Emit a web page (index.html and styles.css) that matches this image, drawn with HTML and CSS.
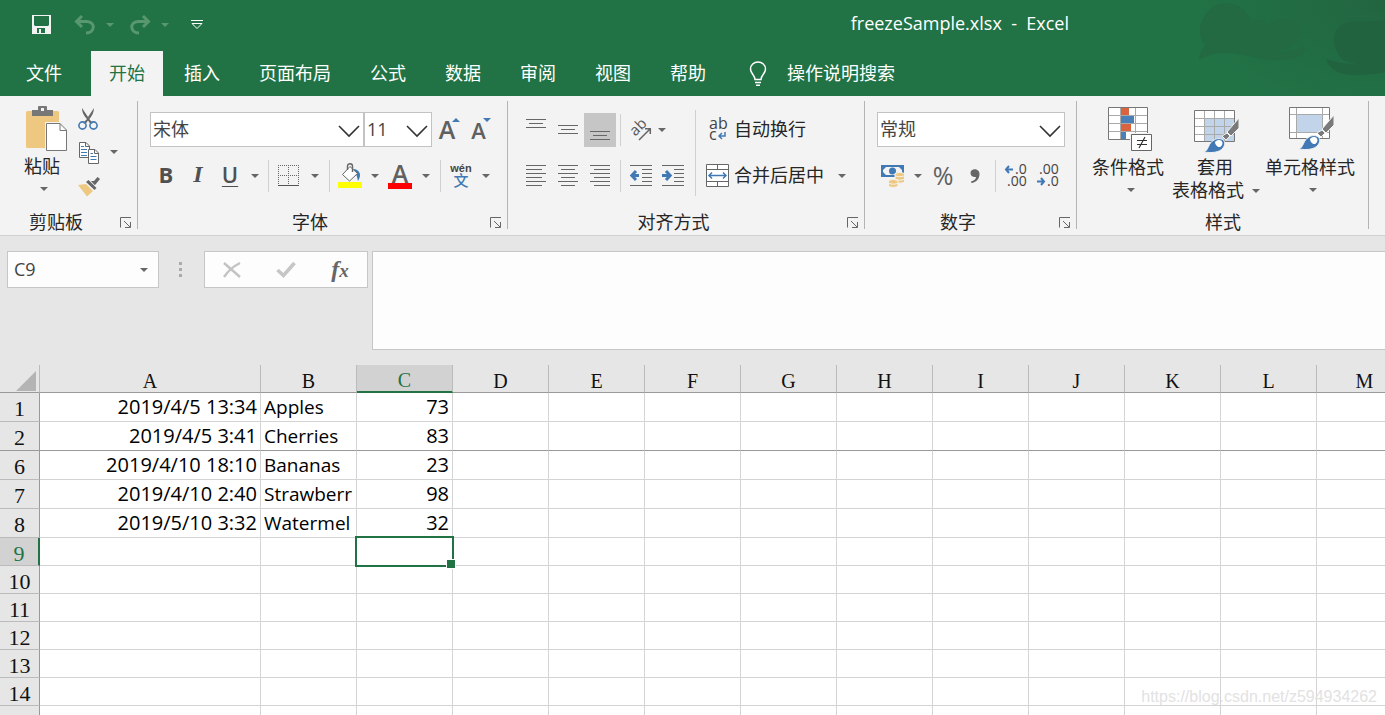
FILE: index.html
```html
<!DOCTYPE html>
<html lang="zh-CN">
<head>
<meta charset="utf-8">
<title>freezeSample.xlsx - Excel</title>
<link rel="stylesheet" href="styles.css">
</head>
<body>
<header class="top">
  <svg class="decor" width="240" height="96" viewBox="0 0 240 96" aria-hidden="true">
    <defs><radialGradient id="fade" gradientUnits="userSpaceOnUse" cx="240" cy="0" r="200" gradientTransform="translate(0 0) scale(1 .6)"><stop offset="0" stop-color="#226540"/><stop offset="1" stop-color="#217346"/></radialGradient></defs>
    <path fill="url(#fade)" d="M0 0H240V96H0z"/>
    <path fill="#236a42" d="M61 45C50 38 53 12 74 4C92 0 102 10 106 22C112 18 120 20 124 25C134 15 154 19 155 31C156 42 150 48 128 52C142 52 151 49 161 47C158 60 138 63 112 58C90 53 74 49 54 60C55 52 57 48 61 45z"/>
    <path fill="#22633f" d="M240 20C226 23 208 19 198 24C186 30 186 48 198 60C206 64 214 64 220 65C206 64 192 63 181 59C184 70 196 75 208 75C224 75 234 74 240 72z"/>
  </svg>
  <div class="titlebar">
    <div class="qat">
      <button class="q" aria-label="保存"><svg width="20" height="20" viewBox="0 0 20 20"><path fill="#f3f3f3" fill-rule="evenodd" d="M0 0H19V19H0zM2 1V10L3 11H16L17 10V1zM5 13V18H7V14H9V18H13V13z"/></svg></button>
      <button class="q dim undo" aria-label="撤消"><svg width="22" height="20" viewBox="0 0 22 20"><path fill="none" stroke="#59976f" stroke-width="3" d="M8 1L2.500 6.500L8 12M2.500 6.500H13C22 7 21 18 12 18"/></svg></button>
      <button class="c qc" aria-label="撤消选项"><i class="caret"></i></button>
      <button class="q dim redo" aria-label="恢复"><svg width="22" height="20" viewBox="0 0 22 20"><path fill="none" stroke="#59976f" stroke-width="3" d="M14 1L19.500 6.500L14 12M19.500 6.500H9C0 7 1 18 10 18"/></svg></button>
      <button class="c qc" aria-label="恢复选项"><i class="caret"></i></button>
      <button class="q more" aria-label="自定义快速访问工具栏"><svg width="12" height="10" viewBox="0 0 12 10"><path fill="none" stroke="#fff" d="M0 .5H12M1 3.500L6 8.500L11 3.500z"/></svg></button>
    </div>
    <div class="title">freezeSample.xlsx &nbsp;-&nbsp; Excel</div>
  </div>
  <nav class="tabs">
    <button class="tab file">文件</button><button class="tab active">开始</button><button class="tab">插入</button><button class="tab">页面布局</button><button class="tab">公式</button><button class="tab">数据</button><button class="tab">审阅</button><button class="tab">视图</button><button class="tab">帮助</button>
    <button class="tell"><svg width="18" height="26" viewBox="0 0 18 26"><path fill="none" stroke="#fff" stroke-width="1.500" d="M6 18.500C6 14 1.500 13 1.500 8A7.500 7 0 0 1 16.500 8C16.500 13 12 14 12 18.500zM6 21.500H12M7 24.200H11"/></svg><span>操作说明搜索</span></button>
  </nav>
</header>

<section class="ribbon">
  <div class="group">
    <div class="clip">
      <button class="big paste"><svg width="42" height="46" viewBox="0 0 42 46"><rect y="5" width="33" height="37" rx="1.500" fill="#eec881"/><path fill="#777" d="M6 4H12V1Q12 0 13 0H20Q21 0 21 1V4H27V10H6z"/><rect x="15" y="2" width="3" height="3" fill="#f3f3f3"/><path fill="#fff" stroke="#f3f3f3" stroke-width="3" d="M20.500 17.500H34L40.500 24V44.500H20.500z"/><path fill="#fff" stroke="#777" d="M20.500 17.500H34L40.500 24V44.500H20.500zM34 17.500V24.500H40.500"/></svg><span>粘贴</span><i class="caret"></i></button>
      <div class="small">
        <button class="ic" aria-label="剪切"><svg width="22" height="24" viewBox="0 0 22 24"><path fill="#666" d="M4 1L12 13L15 16L12.500 17L10 13.500L7.500 17L5 16L9 12C5 8 4 4 4 1zM16 1C16 5 14 9 11.500 12L10 10z"/><g fill="none" stroke="#4179b4" stroke-width="1.600"><circle cx="4.500" cy="18.500" r="3.600"/><circle cx="15.500" cy="18.500" r="3.600"/></g></svg></button>
        <button class="ic" aria-label="复制"><svg width="22" height="24" viewBox="0 0 22 24"><g fill="#fff" stroke="#666"><path d="M1.500 1.500H8L11.500 5V16.500H1.500zM7.500 1.500V5.500H11.500"/><path d="M10.500 8.500H17L20.500 12V22.500H10.500zM16.500 8.500V12.500H20.500"/></g><path stroke="#4179b4" d="M3 5.500H6M3 8.500H9M3 11.500H9M3 14.500H9M12.500 12.500H15M12.500 15.500H18.500M12.500 18.500H18.500"/></svg></button>
        <button class="ic" aria-label="格式刷"><svg width="24" height="22" viewBox="0 0 24 22"><path fill="#eec881" d="M1 9L9 8L16 15L10 20.500z"/><path fill="#666" d="M9 6L11.500 4L19.500 12L17.500 14zM14 5L17 5L20.500 1L23 3L18.500 8.500L17.500 9z"/></svg></button>
      </div>
      <button class="c" aria-label="复制选项"><i class="caret"></i></button>
    </div>
    <footer><span>剪贴板</span><button class="launch" aria-label="剪贴板设置"><svg width="12" height="12" viewBox="0 0 12 12"><path fill="none" stroke="#666" d="M.5 10.500V.5H11M4 4L10 10M10.500 5V10.500H5"/></svg></button></footer>
  </div>

  <div class="group pad">
    <div class="rows">
      <div class="row">
        <label class="sel fontname"><select aria-label="字体"><option>宋体</option></select><svg width="22" height="12" viewBox="0 0 22 12"><path d="M1 1L11 11L21 1"/></svg></label>
        <label class="sel fontsize"><select aria-label="字号"><option>11</option></select><svg width="22" height="12" viewBox="0 0 22 12"><path d="M1 1L11 11L21 1"/></svg></label>
        <button class="ic b32 grow" aria-label="增大字号"><b>A</b><i class="up"></i></button>
        <button class="ic b32 shrink" aria-label="减小字号"><b>A</b><i class="down"></i></button>
      </div>
      <div class="row">
        <button class="ic b32 glyph bold">B</button><button class="ic b32 glyph ital">I</button><button class="ic b32 glyph under">U</button>
        <button class="c c18" aria-label="下划线选项"><i class="caret"></i></button><i class="sep"></i>
        <button class="ic b32" aria-label="边框"><svg width="22" height="22" viewBox="0 0 22 22"><path fill="none" stroke="#666" stroke-dasharray="1 1" d="M.5 0V20M10.500 0V20M20.500 0V20M0 .5H21M0 10.500H21"/><path stroke="#555" d="M0 20.500H21"/></svg></button>
        <button class="c c20" aria-label="边框选项"><i class="caret"></i></button><i class="sep"></i>
        <button class="ic b32" aria-label="填充颜色"><svg width="24" height="26" viewBox="0 0 24 26"><path fill="#4179b4" d="M16 6C22 7 24 12 20 18C19 14 19 11 15 8z"/><path fill="#fff" stroke="#666" d="M12 3.500L19.500 10.500L11.500 18L4.500 11.500z"/><path fill="none" stroke="#666" stroke-width="1.400" d="M9.500 7V3C9.500 0 14.500 0 14.500 3V9"/><path fill="#ff0" d="M0 19H24V25H0z"/></svg></button>
        <button class="c c18" aria-label="填充选项"><i class="caret"></i></button>
        <button class="ic b32 fcolor" aria-label="字体颜色"><b>A</b></button>
        <button class="c c20" aria-label="字体颜色选项"><i class="caret"></i></button><i class="sep"></i>
        <button class="ic b32 wen" aria-label="拼音"><span>wén</span><em>文</em></button>
        <button class="c c18" aria-label="拼音选项"><i class="caret"></i></button>
      </div>
    </div>
    <footer><span>字体</span><button class="launch" aria-label="字体设置"><svg width="12" height="12" viewBox="0 0 12 12"><path fill="none" stroke="#666" d="M.5 10.500V.5H11M4 4L10 10M10.500 5V10.500H5"/></svg></button></footer>
  </div>

  <div class="group pad align">
    <div class="cols">
      <div class="rows">
        <div class="row">
          <button class="ic b32" aria-label="顶端对齐"><svg width="20" height="22" viewBox="0 0 20 22"><path stroke="#666" d="M0 .5H20M3 4.500H17M0 8.500H20"/></svg></button>
          <button class="ic b32" aria-label="垂直居中"><svg width="20" height="22" viewBox="0 0 20 22"><path stroke="#666" d="M0 6.500H20M3 10.500H17M0 14.500H20"/></svg></button>
          <button class="ic b32 on" aria-label="底端对齐"><svg width="20" height="22" viewBox="0 0 20 22"><path stroke="#666" d="M0 12.500H20M3 16.500H17M0 20.500H20"/></svg></button><i class="sep"></i>
          <button class="ic b32" aria-label="方向"><svg width="22" height="22" viewBox="0 0 22 22"><text x="8" y="13" text-anchor="middle" transform="rotate(-45 8 8)" font-size="15" fill="#555">ab</text><path fill="none" stroke="#666" stroke-width="1.500" d="M9 21L20 10M15 9.700H20.300V15"/></svg></button>
          <button class="c c10" aria-label="方向选项"><i class="caret"></i></button>
        </div>
        <div class="row">
          <button class="ic b32" aria-label="左对齐"><svg width="20" height="22" viewBox="0 0 20 22"><path stroke="#666" d="M0 .5H20M0 4.500H16M0 8.500H20M0 12.500H16M0 16.500H20M0 20.500H16"/></svg></button>
          <button class="ic b32" aria-label="居中"><svg width="20" height="22" viewBox="0 0 20 22"><path stroke="#666" d="M0 .5H20M3 4.500H17M0 8.500H20M3 12.500H17M0 16.500H20M3 20.500H17"/></svg></button>
          <button class="ic b32" aria-label="右对齐"><svg width="20" height="22" viewBox="0 0 20 22"><path stroke="#666" d="M0 .5H20M4 4.500H20M0 8.500H20M4 12.500H20M0 16.500H20M4 20.500H20"/></svg></button><i class="sep"></i>
          <button class="ic b32" aria-label="减少缩进量"><svg width="22" height="22" viewBox="0 0 22 22"><path stroke="#666" d="M0 .5H22M12 4.500H22M12 8.500H22M12 12.500H22M12 16.500H22M0 20.500H22"/><path fill="none" stroke="#4179b4" stroke-width="3" d="M6 6L1.800 10.500L6 15M2 10.500H9"/></svg></button>
          <button class="ic b32" aria-label="增加缩进量"><svg width="22" height="22" viewBox="0 0 22 22"><path stroke="#666" d="M0 .5H22M12 4.500H22M12 8.500H22M12 12.500H22M12 16.500H22M0 20.500H22"/><path fill="none" stroke="#4179b4" stroke-width="3" d="M4 6L8.200 10.500L4 15M8 10.500H0"/></svg></button>
        </div>
      </div>
      <i class="tall"></i>
      <div class="rows">
        <div class="row"><button class="txt"><svg width="24" height="24" viewBox="0 0 24 24"><text x="3" y="11" font-size="16" fill="#444">ab</text><text x="3" y="22" font-size="16" fill="#444">c</text><path fill="none" stroke="#4179b4" stroke-width="1.500" d="M19 14V18H13M16 15L13 18L16 21"/></svg><span>自动换行</span></button></div>
        <div class="row"><button class="txt"><svg width="24" height="24" viewBox="0 0 24 24"><path fill="#fff" stroke="#666" d="M.5 .5H22.500V22.500H.5zM.5 5.500H22.500M.5 17.500H22.500M11.500 .5V5.500M11.500 17.500V22.500"/><path fill="none" stroke="#4179b4" stroke-width="1.500" d="M3 11.500H20M6 8.500L3 11.500L6 14.500M17 8.500L20 11.500L17 14.500"/></svg><span>合并后居中</span></button><button class="c c36" aria-label="合并选项"><i class="caret"></i></button></div>
      </div>
    </div>
    <footer><span>对齐方式</span><button class="launch" aria-label="对齐设置"><svg width="12" height="12" viewBox="0 0 12 12"><path fill="none" stroke="#666" d="M.5 10.500V.5H11M4 4L10 10M10.500 5V10.500H5"/></svg></button></footer>
  </div>

  <div class="group pad">
    <div class="rows">
      <div class="row"><label class="sel numfmt"><select aria-label="数字格式"><option>常规</option></select><svg width="22" height="12" viewBox="0 0 22 12"><path d="M1 1L11 11L21 1"/></svg></label></div>
      <div class="row">
        <button class="ic b32" aria-label="会计数字格式"><svg width="24" height="24" viewBox="0 0 24 24"><path fill="#4179b4" fill-rule="evenodd" d="M0 1H23V13H0zM2 3V11H21V3z"/><path fill="#4179b4" d="M2 3H5L2 6zM21 3H18L21 6zM2 11V8L5 11z"/><circle cx="11.500" cy="7" r="3.500" fill="#4179b4"/><g fill="#eec881" stroke="#f3f3f3"><path d="M14 9.500Q19 7 23.500 9.500V18.500Q19 20 14 18.500z"/><path d="M7.500 16.500Q12 14 17 16.500V22.500Q12 24.500 7.500 22.500z"/><path fill="none" d="M14 12Q19 13.500 23 12M14 15.500Q19 17 23 15.500M8 19.500Q12 21 17 19.500"/></g></svg></button>
        <button class="c c18" aria-label="货币选项"><i class="caret"></i></button>
        <button class="ic b32 pct">%</button>
        <button class="ic b32" aria-label="千位分隔样式"><svg width="10" height="16" viewBox="0 0 10 16"><path fill="#666" d="M1 13.500C4 12.500 6 11 6 9C3 9.500 .5 8 .5 5C.5 0 9.500 0 9.500 6C9.500 11 6 14.500 1.500 15z"/></svg></button><i class="sep"></i>
        <button class="ic b32" aria-label="增加小数位数"><svg width="24" height="24" viewBox="0 0 24 24"><text x="11" y="10" font-size="14" fill="#444">.0</text><text x="3" y="22" font-size="14" fill="#444">.00</text><path fill="none" stroke="#4179b4" stroke-width="2" d="M5 2L2 5.500L5 9M2 5.500H9"/></svg></button>
        <button class="ic b32" aria-label="减少小数位数"><svg width="24" height="24" viewBox="0 0 24 24"><text x="3" y="10" font-size="14" fill="#444">.00</text><text x="11" y="22" font-size="14" fill="#444">.0</text><path fill="none" stroke="#4179b4" stroke-width="2" d="M5 14L8 17.500L5 21M8 17.500H1"/></svg></button>
      </div>
    </div>
    <footer><span>数字</span><button class="launch" aria-label="数字设置"><svg width="12" height="12" viewBox="0 0 12 12"><path fill="none" stroke="#666" d="M.5 10.500V.5H11M4 4L10 10M10.500 5V10.500H5"/></svg></button></footer>
  </div>

  <div class="group styles">
    <div class="bigs">
      <button class="big"><svg width="44" height="46" viewBox="0 0 44 46"><rect x=".5" y=".5" width="39" height="32" fill="#fff"/><path stroke="#aaa" d="M12.500 1V32M27.500 1V32M1 8.500H39M1 16.500H39M1 24.500H39"/><path fill="none" stroke="#777" d="M.5 .5H39.500V32.500H.5z"/><path fill="#d9623f" d="M13 1H21V8H13zM13 17H23V24H13z"/><path fill="#4a7fb8" d="M13 9H26V16H13zM13 25H18V32H13z"/><path fill="#fff" stroke="#f3f3f3" stroke-width="3" d="M23.500 27.500H43.500V43.500H23.500z"/><path fill="#fff" stroke="#666" d="M23.500 27.500H43.500V43.500H23.500z"/><path stroke="#333" stroke-width="1.200" d="M29 33.500H39M29 37.500H39M37 30L31 41"/></svg><span>条件格式</span><i class="caret"></i></button>
      <button class="big"><svg width="46" height="46" viewBox="0 0 46 46"><rect x=".5" y="3.500" width="40" height="31" fill="#fff"/><path fill="#c2d4ea" d="M11 12H40V34H11z"/><path stroke="#aaa" d="M10.500 4V34M20.500 4V34M30.500 4V34M1 11.500H40M1 19.500H40M1 27.500H40"/><path fill="none" stroke="#777" d="M.5 3.500H40.500V34.500H.5z"/><g stroke="#f3f3f3"><path fill="#7a7a7a" d="M45 11V21L37 29L33 25zM33 26L36 29L32 33L28 29z"/><path fill="#4179b4" d="M10 45C15 43 14 36 20 33C27 29 34 34 29 41C25 46 17 46 10 45z"/></g><path fill="#fff" d="M21 35C25 31 30 34 28 38C25 43 21 38 21 35z"/></svg><span>套用</span><span class="second">表格格式<i class="caret"></i></span></button>
      <button class="big"><svg width="46" height="46" viewBox="0 0 46 46"><rect x=".5" y=".5" width="40" height="31" fill="#fff"/><path fill="#c2d4ea" d="M8 8H33V25H8z"/><path stroke="#aaa" d="M7.500 1V31M33.500 1V31M1 7.500H40M1 25.500H40"/><path fill="none" stroke="#777" d="M.5 .5H40.500V31.500H.5z"/><g stroke="#f3f3f3"><path fill="#7a7a7a" d="M45 8V18L37 26L33 22zM33 23L36 26L32 30L28 26z"/><path fill="#4179b4" d="M10 42C15 40 14 33 20 30C27 26 34 31 29 38C25 43 17 43 10 42z"/></g><path fill="#fff" d="M21 32C25 28 30 31 28 35C25 40 21 35 21 32z"/></svg><span>单元格样式</span><i class="caret"></i></button>
    </div>
    <footer><span>样式</span></footer>
  </div>
</section>

<section class="formula">
  <label class="name"><input value="C9" aria-label="名称框"><i class="caret"></i></label>
  <svg class="dots" width="3" height="15" viewBox="0 0 3 15"><path fill="#aaa" d="M0 0H3V3H0zM0 6H3V9H0zM0 12H3V15H0z"/></svg>
  <div class="fx">
    <button aria-label="取消"><svg width="18" height="16" viewBox="0 0 18 16"><path fill="none" stroke="#c3c3c3" stroke-width="2.400" d="M1 1L17 15M17 1C11 4 5 9 1 15"/></svg></button>
    <button aria-label="输入"><svg width="20" height="16" viewBox="0 0 20 16"><path fill="none" stroke="#c6c6c6" stroke-width="3.600" d="M1.500 8L7.500 13.500L18.500 1"/></svg></button>
    <button class="f" aria-label="插入函数"><span>f<small>x</small></span></button>
  </div>
  <textarea aria-label="编辑栏"></textarea>
</section>

<main class="sheet">
  <table>
    <thead><tr id="letters"></tr></thead>
    <tbody id="cells"></tbody>
  </table>
  <div class="mark">https://blog.csdn.net/z594934262</div>
</main>
<script src="sheet.js"></script>
</body>
</html>
```
FILE: sheet.js
```js
const columns = "ABCDEFGHIJKLM".split("");
const data = {
  1: ["2019/4/5 13:34", "Apples", "73"],
  2: ["2019/4/5 3:41", "Cherries", "83"],
  6: ["2019/4/10 18:10", "Bananas", "23"],
  7: ["2019/4/10 2:40", "Strawberr", "98"],
  8: ["2019/5/10 3:32", "Watermel", "32"]
};
const rows = [1, 2, 6, 7, 8, 9, 10, 11, 12, 13, 14, 15];
document.getElementById("letters").innerHTML =
  '<th class="corner"><i></i></th>' +
  columns.map(c => `<th class="col${c === "A" ? " wide" : ""}${c === "C" ? " cur" : ""}">${c}</th>`).join("");
document.getElementById("cells").innerHTML = rows.map(r => {
  const values = data[r] || [];
  const kind = (values.length ? "filled" : "") + (r === 2 ? " frozen" : "") + (r === 9 ? " cur" : "");
  const cells = columns.map((c, i) =>
    `<td class="${c === "B" ? "" : "num"}${r === 9 && c === "C" ? " picked" : ""}">${values[i] || ""}</td>`).join("");
  return `<tr class="${kind}"><th>${r}</th>${cells}</tr>`;
}).join("");
```
FILE: styles.css
```css
* { box-sizing: border-box; }
body {
  margin: 0;
  height: 100vh;
  display: flex;
  flex-direction: column;
  overflow: hidden;
  background: #e6e6e6;
  color: #262626;
  font: 18px/23px "Open Sans", "Noto Sans CJK SC", sans-serif;
}
button, select, input, textarea { font: inherit; color: inherit; border: 0; background: none; padding: 0; margin: 0; border-radius: 0; }
svg { display: block; flex: none; overflow: visible; }
button { display: flex; align-items: center; justify-content: center; flex: none; }
.caret { width: 0; height: 0; border: 4px solid transparent; border-top-color: #666; border-bottom: 0; flex: none; }

.top { position: relative; background: #217346; color: #fff; flex: none; }
.decor { position: absolute; right: 0; top: 0; }
.titlebar { position: relative; display: flex; align-items: center; height: 51px; padding: 0 316px 4px 32px; }
.qat { display: flex; align-items: center; padding-top: 2px; }
.undo { margin-left: 22px; }
.redo { margin-left: 15px; }
.more { margin-left: 22px; }
.qc { margin-left: 10px; }
.qc .caret { border-top-color: #59976f; }
.title { margin-left: auto; white-space: nowrap; }
.tabs { position: relative; display: flex; gap: 3px; height: 45px; padding-left: 8px; }
.tab { padding: 0 18px; }
.file { margin-right: 8px; }
.active { background: #f3f3f3; color: #217346; }
.tell { gap: 20px; margin-left: 22px; }

.ribbon { display: flex; flex: none; background: #f3f3f3; border-bottom: 1px solid #d0d0d0; padding-top: 5px; }
.group { display: flex; flex-direction: column; justify-content: space-between; position: relative; height: 134px; }
.group::after { content: ""; position: absolute; right: 0; top: 0; width: 1px; height: 128px; background: #b4b4b4; }
.group footer { display: flex; align-items: center; gap: 8px; padding: 2px 6px 0 0; height: 27px; }
.group footer span { flex: 1; text-align: center; }
.group.pad footer { margin-left: -12px; }
.pad { padding-left: 12px; }
.rows { display: flex; flex-direction: column; gap: 11px; padding-top: 11px; }
.row { display: flex; align-items: center; height: 35px; }
.clip { display: flex; padding: 5px 18px 0 20px; }
.big { flex-direction: column; justify-content: flex-start; position: relative; }
.big span { padding-top: 3px; }
.big > .caret { margin-top: 9px; }
.paste > svg { margin-left: 6px; }
.paste span { margin-right: 4px; }
.small { display: flex; flex-direction: column; gap: 9px; margin: 0 9px 0 9px; }
.small .ic { width: 24px; height: 25px; }
.clip .c { height: 92px; }
.sel { position: relative; height: 35px; display: block; background: #fff; border: 1px solid #c3c3c3; }
.sel select { appearance: none; width: 100%; height: 100%; padding-left: 2px; color: #444; }
.sel svg { position: absolute; right: 3px; top: 12px; pointer-events: none; }
.sel path { fill: none; stroke: #333; stroke-width: 1.6; }
.fontname { width: 214px; }
.fontsize { width: 68px; }
.numfmt { width: 188px; }
.b32 { width: 32px; height: 34px; }
.c10 { width: 10px; }
.c18 { width: 18px; }
.c20 { width: 20px; }
.c36 { width: 36px; }
.sep { width: 1px; height: 32px; margin: 0 4px; background: #d0d0d0; }
.tall { width: 1px; height: 86px; margin: 9px 10px 0 6px; background: #d0d0d0; }
.cols { display: flex; }
.on { background: #c6c6c6; }
.txt { gap: 4px; }
.glyph { font-size: 22px; font-weight: 700; color: #505050; padding-bottom: 3px; }
.ital { font-family: "Liberation Serif", serif; font-style: italic; font-size: 24px; }
.under { text-decoration: underline; text-decoration-thickness: 1px; text-underline-offset: 3px; font-weight: 600; }
.grow b, .shrink b { color: #606060; font-weight: 600; }
.grow { padding-left: 3px; }
.shrink { padding-left: 2px; }
.grow b { font-size: 25px; }
.shrink b { font-size: 22px; padding-top: 1px; }
.up, .down { width: 0; height: 0; border: 4px solid transparent; align-self: flex-start; margin: 5px 0 0 -3px; }
.up { border-bottom-color: #4179b4; border-top: 0; }
.down { border-top-color: #4179b4; border-bottom: 0; }
.fcolor b { width: 24px; height: 26px; border-bottom: 6px solid red; line-height: 20px; font-size: 25px; font-weight: 600; color: #606060; }
.wen { flex-direction: column; font-size: 12px; color: #444; font-weight: 600; }
.wen span { line-height: 10px; font-family: "Liberation Sans", sans-serif; font-weight: 700; font-size: 11px; }
.wen em { font-style: normal; font-size: 15px; line-height: 15px; color: #4179b4; font-weight: 500; }
.pct { font-size: 25px; color: #606060; }
.align { width: 357px; }
.ribbon .group:nth-child(1) { width: 138px; }
.ribbon .group:nth-child(2) { width: 370px; }
.ribbon .group:nth-child(4) { width: 212px; }
.styles { width: 292px; }
.styles footer { padding-right: 0; }
.bigs { display: flex; gap: 6px; padding: 6px 0 0 15px; align-items: flex-start; }
.bigs .big > .caret { margin-left: 6px; }
.bigs .big:nth-child(3) { margin-left: -1px; }
.big .second { display: flex; align-items: center; gap: 8px; padding: 0 0 0 2px; }
.bigs svg { margin-left: 3px; }

.formula { display: flex; align-items: flex-start; flex: none; padding-top: 15px; height: 129px; }
.name { display: flex; align-items: center; width: 152px; height: 37px; margin-left: 7px; padding: 0 10px 0 6px; background: #fdfdfd; border: 1px solid #c6c6c6; color: #444; }
.name input { flex: 1; min-width: 0; }
.dots { margin: 11px 22px 0 20px; }
.fx { display: flex; width: 164px; height: 37px; background: #fdfdfd; border: 1px solid #c6c6c6; }
.fx button { flex: 1; }
.f { font: italic bold 24px/24px "Liberation Serif", serif; color: #666; }
.f small { font-size: 19px; }
.formula textarea { flex: 1; height: 99px; margin-left: 4px; background: #fdfdfd; border: 1px solid #c6c6c6; border-right: 0; resize: none; padding: 6px; }

.sheet { flex: 1; overflow: hidden; position: relative; }
table { table-layout: fixed; width: 1413px; border-spacing: 0; }
th { font: 22px/22px "Liberation Serif", serif; background: #e6e6e6; color: #111; padding: 4px 0 0; border-right: 1px solid #999; border-bottom: 1px solid #bbb; }
thead th { height: 28px; font-size: 20px; line-height: 20px; padding-top: 4px; border-right-color: #bbb; border-bottom-color: #999; }
.corner { width: 40px; }
.corner i { display: block; width: 0; margin-left: 16px; border: 10px solid transparent; border-right-color: #b4b4b4; border-bottom-color: #b4b4b4; }
.col { width: 96px; }
.wide { width: 221px; }
thead .cur { background: #d2d2d2; color: #217346; border-bottom: 2px solid #217346; }
tbody .cur th { background: #d2d2d2; color: #217346; border-right: 2px solid #217346; }
td { height: 28px; padding: 0 3px; background: #fff; border-right: 1px solid #d4d4d4; border-bottom: 1px solid #d4d4d4; font: 19px/24px "Open Sans", sans-serif; color: #000; white-space: nowrap; overflow: hidden; }
.filled td { height: 29px; }
.frozen td, .frozen th { border-bottom-color: #999; }
.num { text-align: right; font-size: 20px; }
.picked { position: relative; overflow: visible; }
.picked::before { content: ""; position: absolute; inset: -2px; border: 2px solid #217346; }
.picked::after { content: ""; position: absolute; right: -4px; bottom: -4px; width: 8px; height: 8px; background: #217346; border: 1px solid #fff; }
.mark { position: absolute; right: 8px; bottom: 7px; font: 16px/22px "Liberation Sans", sans-serif; color: #e2e2e2; }
```
